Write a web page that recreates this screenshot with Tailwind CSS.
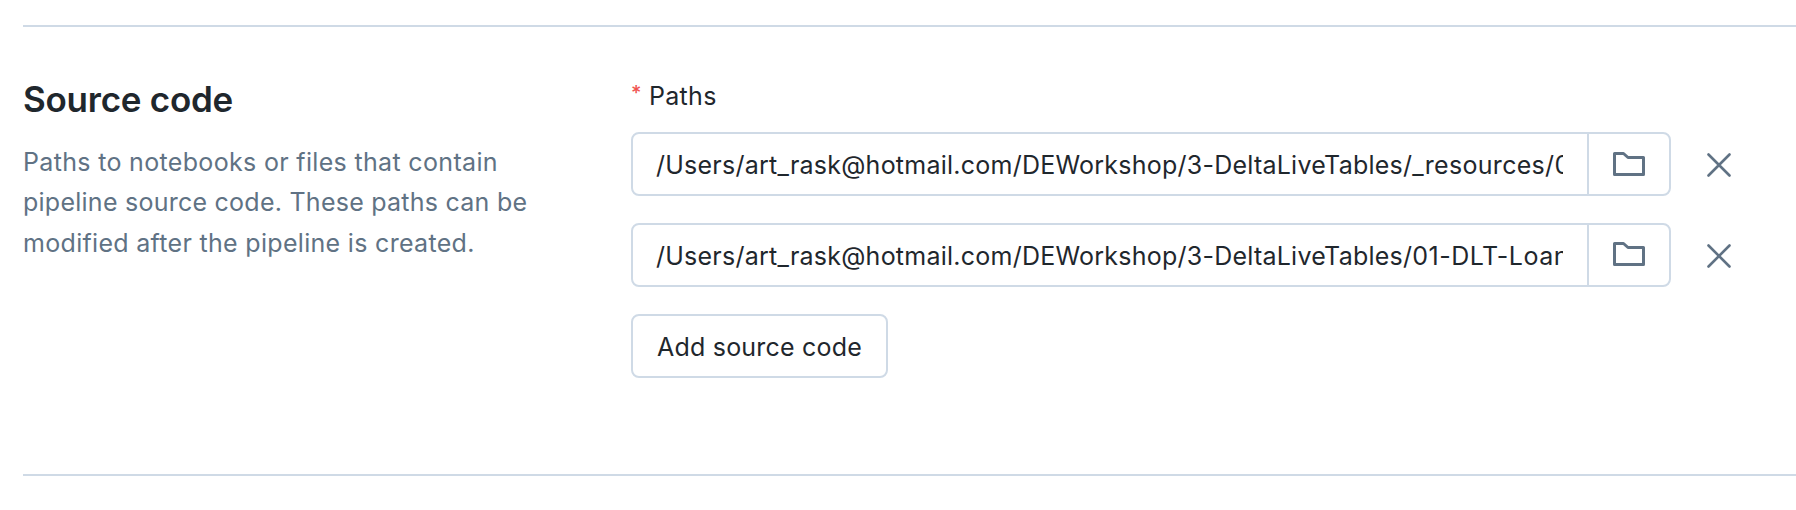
<!DOCTYPE html>
<html lang="en">
<head>
<meta charset="utf-8">
<title>Source code</title>
<script src="https://cdn.jsdelivr.net/npm/@tailwindcss/browser@4"></script>
</head>
<body class="h-[510px] overflow-hidden bg-white pt-[25px] pl-[23px] font-['Inter','Liberation_Sans',sans-serif] text-[25px] text-[#1f272d]">
  <section class="flex h-[451px] border-y-2 border-[#cfdae6]">
    <div class="w-[608px] shrink-0 pt-12">
      <h2 class="text-[35px] leading-[48px] font-semibold tracking-[-0.25px]">Source code</h2>
      <p class="mt-[19px] leading-[40.3px] whitespace-nowrap text-[#607284]"><span class="tracking-[0.33px]">Paths to notebooks or files that contain</span><br><span class="tracking-[0.25px]">pipeline source code. These paths can be</span><br><span class="tracking-[0.31px]">modified after the pipeline is created.</span></p>
    </div>
    <div class="pt-[49px]">
      <div class="flex h-10 leading-10"><span class="w-[18px] text-[20px] leading-[35px] font-medium text-[#f0524f]">*</span><span class="tracking-[0.3px]">Paths</span></div>
      <div class="mt-4 flex flex-col items-start gap-[27px]">
        <div class="flex items-center">
          <div class="flex h-16 w-[1040px] rounded-lg border-2 border-[#cfdae6]">
            <div class="w-[954px] pr-6 pl-[23px] leading-[62px] tracking-[0.24px]"><div class="h-[60px] overflow-hidden whitespace-nowrap">/Users/art_rask@hotmail.com/DEWorkshop/3-DeltaLiveTables/<span class="tracking-[0.3px]">_resources/00</span></div></div>
            <button class="flex flex-1 justify-center border-l-2 border-[#cfdae6] pt-[18px]" aria-label="Browse">
              <svg class="h-6 w-8" viewBox="0 0 32 24" fill="none" stroke="#607284" stroke-width="3" stroke-linejoin="round"><path d="M1.5 1.5H10.5L15 5.5H30.5V22.5H1.5Z"/></svg>
            </button>
          </div>
          <button class="ml-9 pt-0.5" aria-label="Remove"><svg class="size-6" viewBox="0 0 24 24" fill="none" stroke="#607284" stroke-width="2.6" stroke-linecap="round"><path d="M1.5 1.5L22.5 22.5M22.5 1.5L1.5 22.5"/></svg></button>
        </div>
        <div class="flex items-center">
          <div class="flex h-16 w-[1040px] rounded-lg border-2 border-[#cfdae6]">
            <div class="w-[954px] pr-6 pl-[23px] leading-[62px] tracking-[0.24px]"><div class="h-[60px] overflow-hidden whitespace-nowrap">/Users/art_rask@hotmail.com/DEWorkshop/3-DeltaLiveTables/<span class="tracking-[0.5px]">01-DLT-Loan</span></div></div>
            <button class="flex flex-1 justify-center border-l-2 border-[#cfdae6] pt-[17px]" aria-label="Browse">
              <svg class="h-6 w-8" viewBox="0 0 32 24" fill="none" stroke="#607284" stroke-width="3" stroke-linejoin="round"><path d="M1.5 1.5H10.5L15 5.5H30.5V22.5H1.5Z"/></svg>
            </button>
          </div>
          <button class="ml-9 pt-0.5" aria-label="Remove"><svg class="size-6" viewBox="0 0 24 24" fill="none" stroke="#607284" stroke-width="2.6" stroke-linecap="round"><path d="M1.5 1.5L22.5 22.5M22.5 1.5L1.5 22.5"/></svg></button>
        </div>
        <button class="h-16 w-[257px] rounded-lg border-2 border-[#cfdae6] pt-0.5 leading-[58px] tracking-[0.2px]">Add source code</button>
      </div>
    </div>
  </section>
</body>
</html>
